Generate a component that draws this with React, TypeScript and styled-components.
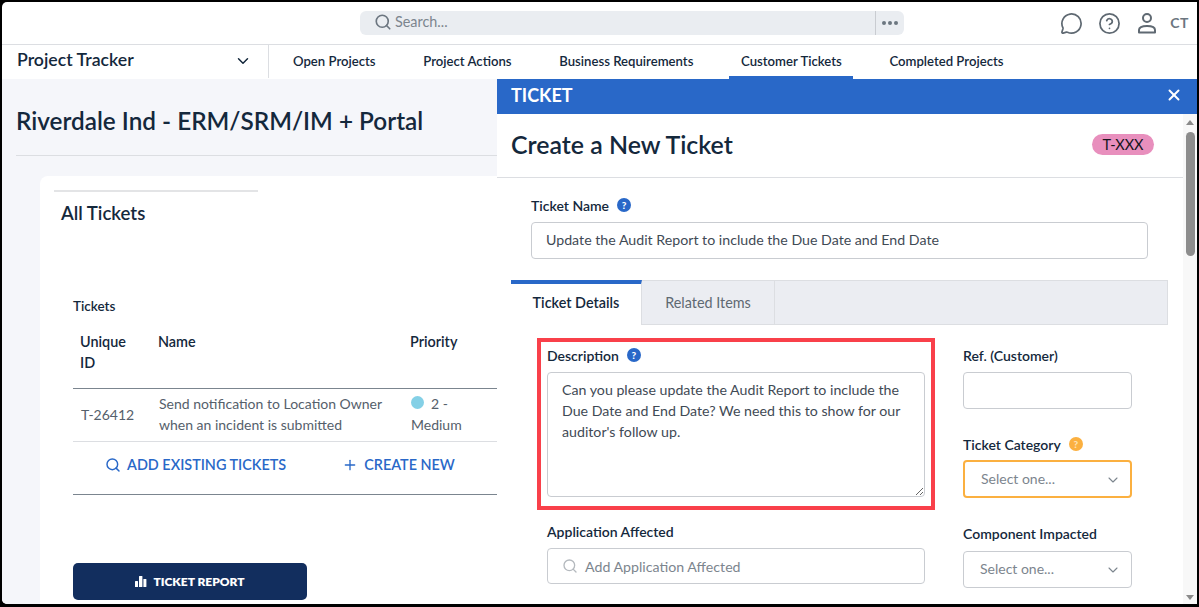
import React from "react";
import styled, { createGlobalStyle } from "styled-components";
import { ChevronDown, CircleHelp, MessageCircle, Plus, Search, X } from "lucide-react";

const GlobalStyle = createGlobalStyle`
  html, body {
    margin: 0;
    height: 100%;
    overflow: hidden;
    background: #000;
  }
  * {
    box-sizing: border-box;
  }
  body, input, textarea {
    font-family: "Lato", "Open Sans", sans-serif;
  }
`;

const Frame = styled.div`
  width: 1199px;
  height: 607px;
  padding: 2px 2px 3px 2px;
  background: #000;
`;

const Screen = styled.div`
  height: 100%;
  display: flex;
  flex-direction: column;
  background: #fff;
  border-radius: 5px 0 0 5px;
  overflow: hidden;
  color: #14283c;
`;

const TopBar = styled.header`
  flex: 0 0 43px;
  position: relative;
  display: flex;
  align-items: center;
  padding-left: 358px;
  border-bottom: 1px solid #dcdee2;
`;

const SearchBox = styled.div`
  width: 544px;
  height: 24px;
  display: flex;
  align-items: center;
  background: #eaedf1;
  border-radius: 6px;
  padding-left: 14px;
  color: #6c7680;
  svg {
    margin-top: -2px;
  }
`;

const SearchInput = styled.input`
  flex: 1;
  min-width: 0;
  height: 100%;
  border: 0;
  background: transparent;
  outline: none;
  font-size: 14.4px;
  margin-left: 3px;
  padding: 0 0 3px;
  &::placeholder {
    color: #7c858e;
    opacity: 1;
  }
`;

const MoreButton = styled.div`
  flex: 0 0 29px;
  height: 100%;
  display: flex;
  align-items: center;
  justify-content: center;
  gap: 2px;
  padding-bottom: 1px;
  border-left: 1px solid #c9ccd1;
`;

const MoreDot = styled.span`
  width: 4px;
  height: 4px;
  border-radius: 50%;
  background: #6c7680;
`;

const TopIcons = styled.div`
  margin-left: auto;
  display: flex;
  align-items: center;
  padding-right: 8px;
  color: #5f6972;
`;

const TopIconSlot = styled.span`
  display: flex;
  width: 38px;
  justify-content: center;
`;

const Initials = styled.span`
  font-size: 14px;
  font-weight: 700;
  letter-spacing: 0.5px;
  color: #6c7680;
  margin: 0 0 2px 4px;
`;

const NavBar = styled.nav`
  flex: 0 0 34px;
  display: flex;
  align-items: stretch;
`;

const Brand = styled.div`
  flex: 0 0 267px;
  display: flex;
  align-items: center;
  justify-content: space-between;
  padding: 0 16px 5px 15px;
  border-right: 1px solid #dcdee2;
  margin-bottom: 1px;
  font-size: 17.7px;
  font-weight: 600;
  svg {
    margin-top: 3px;
  }
`;

const NavLinks = styled.div`
  display: flex;
  padding-left: 12px;
`;

const NavLink = styled.a<{ $active?: boolean }>`
  display: flex;
  align-items: center;
  padding: 1px 11px 0 12px;
  margin-right: 24.7px;
  font-size: 13.15px;
  font-weight: 600;
  color: #14283c;
  white-space: nowrap;
  border-bottom: 3px solid ${({ $active }) => ($active ? "#2968c8" : "transparent")};
`;

const Workspace = styled.div`
  flex: 1;
  min-height: 0;
  display: flex;
`;

const Page = styled.main`
  flex: 0 0 495px;
  overflow: hidden;
  background: #f5f6fa;
  padding: 0 0 0 14px;
`;

const PageTitle = styled.h1`
  margin: 0;
  height: 77px;
  padding: 25px 0 0 0;
  font-size: 24.3px;
  line-height: 33px;
  font-weight: 600;
  border-bottom: 1px solid #dcdee2;
`;

const Card = styled.section`
  margin: 20px 0 0 24px;
  width: 700px;
  height: 460px;
  background: #fff;
  border-radius: 8px;
  padding: 14px 0 0 14px;
`;

const CardRule = styled.div`
  width: 204px;
  height: 2px;
  background: #e3e4e6;
`;

const CardTitle = styled.h2`
  margin: 9px 0 0 7px;
  font-size: 18.6px;
  line-height: 24px;
  font-weight: 600;
`;

const TableBlock = styled.div`
  margin: 72px 0 0 19px;
  width: 553px;
`;

const TableLabel = styled.div`
  font-size: 13.5px;
  line-height: 18px;
  font-weight: 600;
  margin-bottom: 16px;
`;

const Table = styled.table`
  width: 100%;
  table-layout: fixed;
  border-collapse: collapse;
`;

const HeadCell = styled.th<{ $width: number }>`
  width: ${({ $width }) => $width}px;
  padding: 0 7px 15px;
  text-align: left;
  vertical-align: top;
  font-size: 14.4px;
  line-height: 21px;
  font-weight: 600;
  border-bottom: 1px solid #7b858f;
`;

const BodyCell = styled.td`
  padding: 4px 7px 6px 8px;
  font-size: 14px;
  line-height: 21px;
  color: #55606b;
  vertical-align: middle;
  border-bottom: 1px solid #dcdee2;
`;

const PriorityDot = styled.span`
  display: inline-block;
  width: 13px;
  height: 13px;
  border-radius: 50%;
  background: #84d0e6;
  margin-right: 7px;
`;

const TableActions = styled.div`
  height: 53px;
  display: flex;
  align-items: center;
  padding: 0 0 7px 32px;
  border-bottom: 1px solid #7b858f;
`;

const ActionLink = styled.a<{ $gap: number }>`
  display: flex;
  align-items: center;
  gap: 6px;
  margin-right: ${({ $gap }) => $gap}px;
  color: #2968c8;
  font-size: 14.4px;
  font-weight: 600;
`;

const ReportButton = styled.button`
  margin-top: 68px;
  width: 234px;
  height: 37px;
  display: flex;
  align-items: center;
  justify-content: center;
  gap: 6px;
  background: #122e5e;
  color: #fff;
  border: 0;
  border-radius: 5px;
  font-family: inherit;
  font-size: 12px;
  font-weight: 800;
`;

const Drawer = styled.aside`
  flex: 1;
  min-width: 0;
  display: flex;
  flex-direction: column;
  background: #fff;
`;

const DrawerHeader = styled.div`
  flex: 0 0 35px;
  display: flex;
  align-items: center;
  justify-content: space-between;
  padding: 0 14px 3px;
  background: #2968c8;
  color: #fff;
  font-size: 18px;
  font-weight: 700;
`;

const DrawerBody = styled.div`
  flex: 1;
  min-height: 0;
  display: flex;
`;

const DrawerContent = styled.div`
  flex: 1;
  min-width: 0;
  overflow: hidden;
`;

const TicketHead = styled.div`
  height: 64px;
  display: flex;
  align-items: center;
  justify-content: space-between;
  padding: 0 29px 3px 14px;
  border-bottom: 1px solid #dcdee2;
`;

const TicketTitle = styled.h2`
  margin: 0;
  font-size: 24.9px;
  font-weight: 600;
`;

const Badge = styled.span`
  width: 62px;
  height: 21px;
  display: flex;
  align-items: center;
  justify-content: center;
  border-radius: 11px;
  background: #e88fbd;
  color: #14141c;
  font-size: 14.5px;
`;

const NameSection = styled.div`
  padding: 19px 35px 0 34px;
`;

const Label = styled.div`
  display: flex;
  align-items: center;
  gap: 8px;
  height: 16px;
  font-size: 14px;
  font-weight: 600;
  white-space: nowrap;
`;

const HelpDot = styled.span<{ $warn?: boolean }>`
  width: 14px;
  height: 14px;
  display: flex;
  align-items: center;
  justify-content: center;
  border-radius: 50%;
  background: ${({ $warn }) => ($warn ? "#fbb040" : "#2968c8")};
  color: ${({ $warn }) => ($warn ? "#fde2b4" : "#fff")};
  font-size: 10px;
  font-weight: 900;
`;

const TextField = styled.input<{ $height?: number }>`
  display: block;
  width: 100%;
  height: ${({ $height }) => $height ?? 37}px;
  margin-top: 9px;
  padding: 0 14px 2px;
  border: 1px solid #c9ccd1;
  border-radius: 4px;
  font-size: 14.2px;
  color: #3f4a55;
  outline: none;
`;

const Tabs = styled.div`
  margin: 21px 15px 0 14px;
  height: 45px;
  display: flex;
  background: #ebedf2;
  border: 1px solid #dcdee2;
  border-left: 0;
`;

const Tab = styled.div<{ $active?: boolean }>`
  width: ${({ $active }) => ($active ? 131 : 133)}px;
  display: flex;
  align-items: center;
  justify-content: center;
  padding-bottom: ${({ $active }) => ($active ? "4px" : "0")};
  font-size: 14.4px;
  font-weight: ${({ $active }) => ($active ? 600 : 400)};
  color: ${({ $active }) => ($active ? "#14283c" : "#5f6972")};
  background: ${({ $active }) => ($active ? "#fff" : "transparent")};
  border-top: ${({ $active }) => ($active ? "4px solid #2968c8" : "0")};
  border-right: 1px solid #dcdee2;
  margin-top: ${({ $active }) => ($active ? "-1px" : "0")};
  margin-bottom: ${({ $active }) => ($active ? "-1px" : "0")};
`;

const FormGrid = styled.div`
  display: grid;
  grid-template-columns: 398px 169px;
  column-gap: 28px;
  padding: 13px 0 0 40px;
`;

const MainColumn = styled.div`
  display: flex;
  flex-direction: column;
`;

const SideColumn = styled.div`
  display: flex;
  flex-direction: column;
  padding-top: 9px;
`;

const Highlight = styled.div`
  height: 172px;
  padding: 5px 6px 10px 6px;
  border: 4px solid #f9404a;
`;

const DescriptionArea = styled.textarea`
  display: block;
  width: 100%;
  height: 125px;
  margin-top: 9px;
  padding: 6px 14px;
  border: 1px solid #c9ccd1;
  border-radius: 4px;
  font-size: 14.2px;
  line-height: 21px;
  color: #3f4a55;
  resize: vertical;
  outline: none;
`;

const AffectedField = styled.div`
  margin: 13px 10px 0;
`;

const AffectedInput = styled.div`
  height: 36px;
  margin-top: 9px;
  display: flex;
  align-items: center;
  gap: 7px;
  padding: 0 14px;
  border: 1px solid #c9ccd1;
  border-radius: 4px;
  font-size: 14.2px;
  color: #7c858e;
`;

const SideField = styled.div<{ $top: number }>`
  margin-top: ${({ $top }) => $top}px;
`;

const SelectBox = styled.div<{ $warn?: boolean }>`
  height: ${({ $warn }) => ($warn ? 38 : 37)}px;
  margin-top: ${({ $warn }) => ($warn ? 8 : 10)}px;
  display: flex;
  align-items: center;
  justify-content: space-between;
  padding: 0 ${({ $warn }) => ($warn ? 9 : 10)}px 2px 16px;
  border: ${({ $warn }) => ($warn ? "2px solid #fbb040" : "1px solid #c9ccd1")};
  border-radius: 4px;
  font-size: 14px;
  color: #7c858e;
  svg {
    margin-top: 3px;
  }
`;

const Scrollbar = styled.div`
  flex: 0 0 14px;
  display: flex;
  flex-direction: column;
  align-items: center;
  padding-top: 6px;
  background: #f8f8f8;
`;

const ScrollArrow = styled.span<{ $down?: boolean }>`
  width: 0;
  height: 0;
  border-left: 4px solid transparent;
  border-right: 4px solid transparent;
  border-${({ $down }) => ($down ? "top" : "bottom")}: 5px solid #8a8a8a;
  margin-top: ${({ $down }) => ($down ? "auto" : "0")};
  margin-bottom: ${({ $down }) => ($down ? "4px" : "0")};
`;

const ScrollThumb = styled.span`
  width: 9px;
  height: 124px;
  margin-top: 7px;
  border-radius: 5px;
  background: #8d8d8d;
`;

const UserIcon = () => (
  <svg width="22" height="22" viewBox="0 0 22 22" fill="none" stroke="currentColor" strokeWidth="2">
    <circle cx="11" cy="6" r="4" />
    <path d="M3 20.5v-2.5c0-2.2 2.5-4 8-4s8 1.8 8 4v2.5z" strokeLinejoin="round" />
  </svg>
);

const BarsIcon = () => (
  <svg width="12" height="11" viewBox="0 0 12 11" fill="#fff">
    <rect x="0" y="5" width="3" height="6" rx="0.5" />
    <rect x="4" y="0" width="3.4" height="11" rx="0.5" />
    <rect x="8.4" y="3" width="3" height="8" rx="0.5" />
  </svg>
);

const App: React.FC = () => {
  return (
    <Frame>
      <GlobalStyle />
      <Screen>
        <TopBar>
          <SearchBox>
            <Search size={18} strokeWidth={2.2} />
            <SearchInput placeholder="Search..." />
            <MoreButton>
              <MoreDot />
              <MoreDot />
              <MoreDot />
            </MoreButton>
          </SearchBox>
          <TopIcons>
            <TopIconSlot>
              <MessageCircle size={23} strokeWidth={1.8} />
            </TopIconSlot>
            <TopIconSlot>
              <CircleHelp size={23} strokeWidth={1.8} />
            </TopIconSlot>
            <TopIconSlot>
              <UserIcon />
            </TopIconSlot>
            <Initials>CT</Initials>
          </TopIcons>
        </TopBar>
        <NavBar>
          <Brand>
            Project Tracker
            <ChevronDown size={18} strokeWidth={2} />
          </Brand>
          <NavLinks>
            <NavLink>Open Projects</NavLink>
            <NavLink>Project Actions</NavLink>
            <NavLink>Business Requirements</NavLink>
            <NavLink $active>Customer Tickets</NavLink>
            <NavLink>Completed Projects</NavLink>
          </NavLinks>
        </NavBar>
        <Workspace>
          <Page>
            <PageTitle>Riverdale Ind - ERM/SRM/IM + Portal</PageTitle>
            <Card>
              <CardRule />
              <CardTitle>All Tickets</CardTitle>
              <TableBlock>
                <TableLabel>Tickets</TableLabel>
                <Table>
                  <thead>
                    <tr>
                      <HeadCell $width={78}>
                        Unique
                        <br />
                        ID
                      </HeadCell>
                      <HeadCell $width={252}>Name</HeadCell>
                      <HeadCell $width={90}>Priority</HeadCell>
                      <HeadCell $width={133} />
                    </tr>
                  </thead>
                  <tbody>
                    <tr>
                      <BodyCell>T-26412</BodyCell>
                      <BodyCell>Send notification to Location Owner when an incident is submitted</BodyCell>
                      <BodyCell>
                        <PriorityDot />2 - Medium
                      </BodyCell>
                      <BodyCell />
                    </tr>
                  </tbody>
                </Table>
                <TableActions>
                  <ActionLink $gap={56}>
                    <Search size={16} strokeWidth={2.2} />
                    ADD EXISTING TICKETS
                  </ActionLink>
                  <ActionLink $gap={0}>
                    <Plus size={16} strokeWidth={2} />
                    CREATE NEW
                  </ActionLink>
                </TableActions>
                <ReportButton>
                  <BarsIcon />
                  TICKET REPORT
                </ReportButton>
              </TableBlock>
            </Card>
          </Page>
          <Drawer>
            <DrawerHeader>
              TICKET
              <X size={18} strokeWidth={2.6} />
            </DrawerHeader>
            <DrawerBody>
              <DrawerContent>
                <TicketHead>
                  <TicketTitle>Create a New Ticket</TicketTitle>
                  <Badge>T-XXX</Badge>
                </TicketHead>
                <NameSection>
                  <Label>
                    Ticket Name <HelpDot>?</HelpDot>
                  </Label>
                  <TextField readOnly value="Update the Audit Report to include the Due Date and End Date" />
                </NameSection>
                <Tabs>
                  <Tab $active>Ticket Details</Tab>
                  <Tab>Related Items</Tab>
                </Tabs>
                <FormGrid>
                  <MainColumn>
                    <Highlight>
                      <Label>
                        Description <HelpDot>?</HelpDot>
                      </Label>
                      <DescriptionArea
                        readOnly
                        value="Can you please update the Audit Report to include the Due Date and End Date? We need this to show for our auditor's follow up."
                      />
                    </Highlight>
                    <AffectedField>
                      <Label>Application Affected</Label>
                      <AffectedInput>
                        <Search size={16} strokeWidth={2} color="#b4b9be" />
                        Add Application Affected
                      </AffectedInput>
                    </AffectedField>
                  </MainColumn>
                  <SideColumn>
                    <SideField $top={0}>
                      <Label>Ref. (Customer)</Label>
                      <TextField readOnly />
                    </SideField>
                    <SideField $top={27}>
                      <Label>
                        Ticket Category <HelpDot $warn>?</HelpDot>
                      </Label>
                      <SelectBox $warn>
                        Select one...
                        <ChevronDown size={16} strokeWidth={1.6} />
                      </SelectBox>
                    </SideField>
                    <SideField $top={27}>
                      <Label>Component Impacted</Label>
                      <SelectBox>
                        Select one...
                        <ChevronDown size={16} strokeWidth={1.6} />
                      </SelectBox>
                    </SideField>
                  </SideColumn>
                </FormGrid>
              </DrawerContent>
              <Scrollbar>
                <ScrollArrow />
                <ScrollThumb />
                <ScrollArrow $down />
              </Scrollbar>
            </DrawerBody>
          </Drawer>
        </Workspace>
      </Screen>
    </Frame>
  );
};

export default App;
